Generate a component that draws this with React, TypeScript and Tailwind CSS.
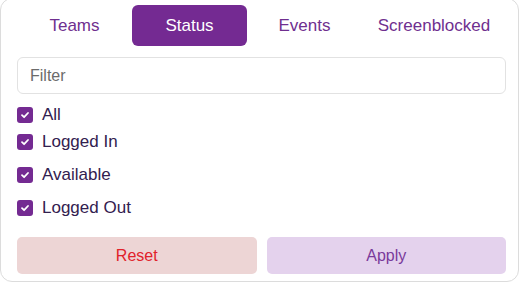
import React from "react";

const tabs = ["Teams", "Status", "Events", "Screenblocked"];
const items = [
  { label: "All", mt: "mt-[9px]" },
  { label: "Logged In", mt: "mt-[3px]" },
  { label: "Available", mt: "mt-[9px]" },
  { label: "Logged Out", mt: "mt-[9px]" },
];

function Check() {
  return (
    <span className="flex h-[16px] w-[16px] items-center justify-center rounded-[3px] bg-[#742a92]">
      <svg width="10" height="10" viewBox="0 0 10 10" fill="none">
        <path d="M2 5.2 L4.1 7.2 L8 3" stroke="white" strokeWidth="1.8" strokeLinecap="round" strokeLinejoin="round" />
      </svg>
    </span>
  );
}

export default function App() {
  return (
    <div className="h-[284px] w-[520px] overflow-hidden bg-white" style={{ fontFamily: '"Liberation Sans", Arial, sans-serif' }}>
      <div className="mt-[-2px] flex h-[284px] w-[519px] flex-col rounded-[12px] border border-[#dcdcdc] bg-white pl-[16px] pr-[12px] pt-[6px]">
        <div className="grid h-[41px] grid-cols-[115px_115px_115px_1fr]">
          {tabs.map((t) => (
            <div
              key={t}
              className={
                t === "Status"
                  ? "flex items-center justify-center rounded-[6px] bg-[#742a92] text-[17px] text-white"
                  : "flex items-center justify-center text-[17px] text-[#6f2f8f]"
              }
            >
              {t}
            </div>
          ))}
        </div>
        <div className="mt-[11px] flex h-[37px] items-center rounded-[6px] border border-[#e2e2e2] px-[12px] text-[16px] text-[#6b6b6b]">
          Filter
        </div>
        {items.map((it) => (
          <div key={it.label} className={`${it.mt} flex h-[24px] items-center gap-[9px]`}>
            <Check />
            <span className="text-[17px] text-[#32204f]">{it.label}</span>
          </div>
        ))}
        <div className="mt-[17px] grid h-[37px] grid-cols-2 gap-[10px]">
          <div className="flex items-center justify-center rounded-[5px] bg-[#edd5d5] text-[16px] text-[#e1222b]">Reset</div>
          <div className="flex items-center justify-center rounded-[5px] bg-[#e4d2ed] text-[16px] text-[#7a3a9b]">Apply</div>
        </div>
      </div>
    </div>
  );
}
